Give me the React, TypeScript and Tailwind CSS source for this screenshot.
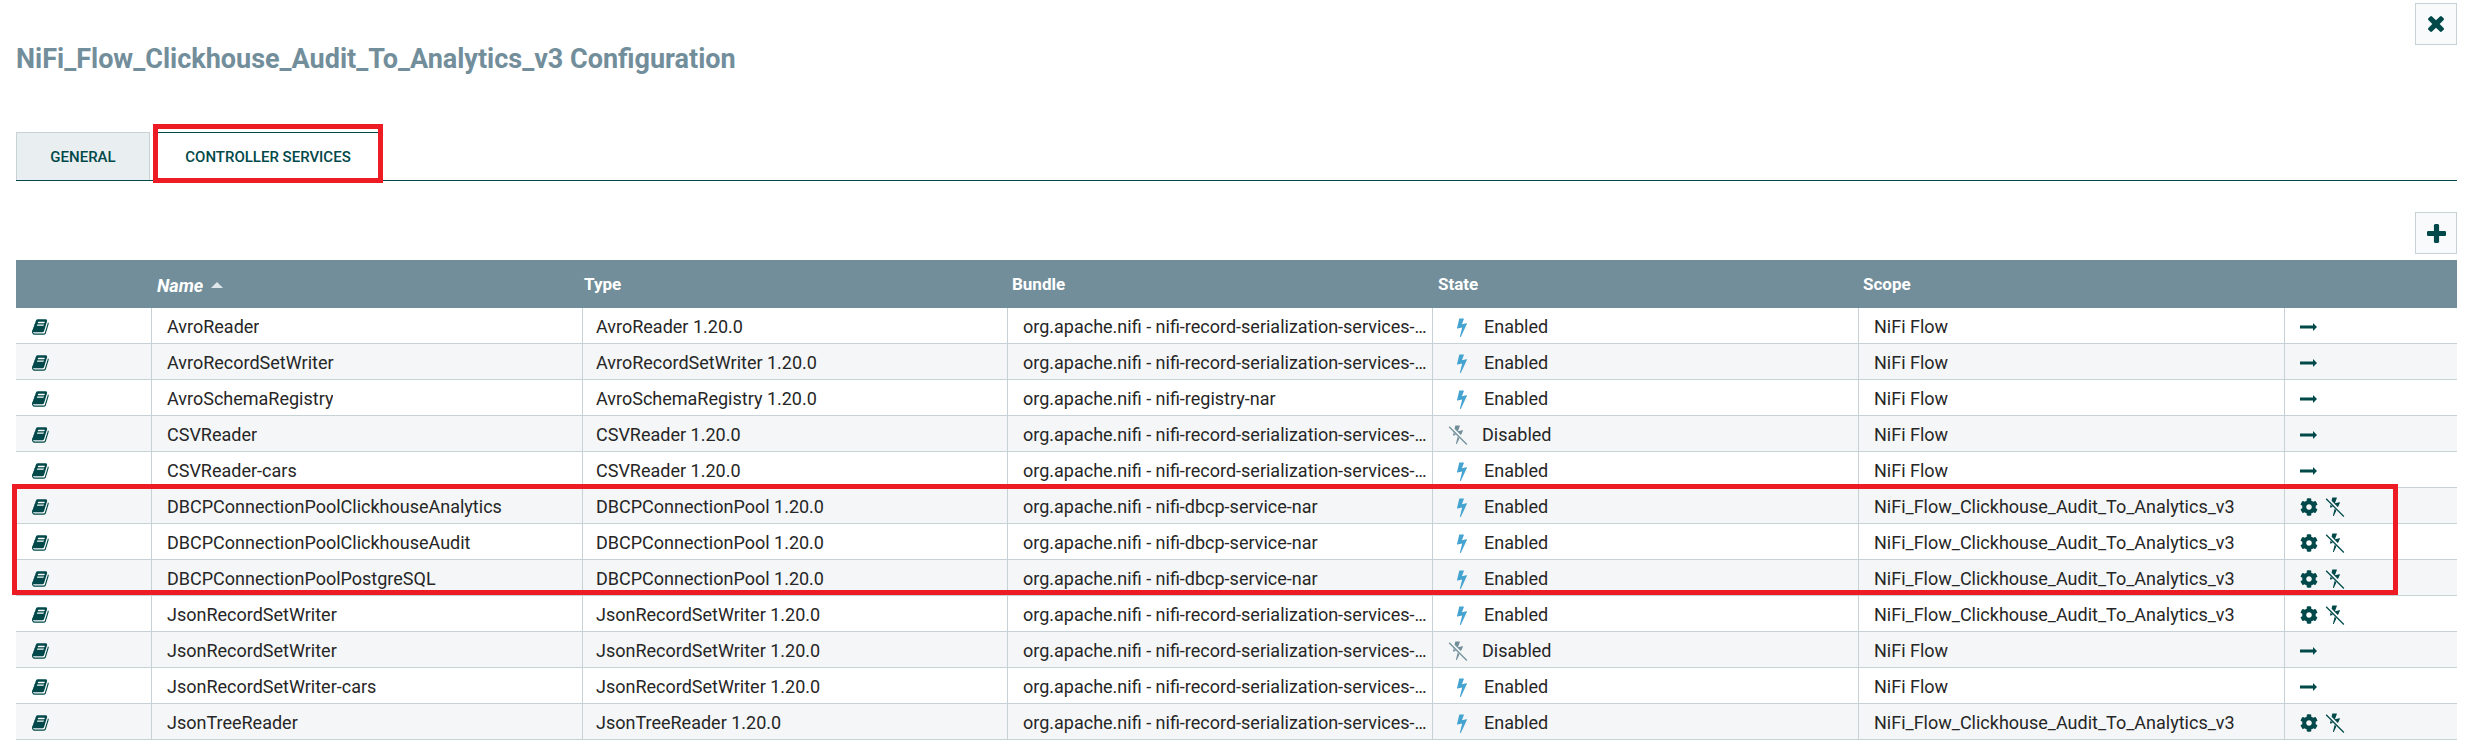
import { useId } from "react";
import { FaCog } from "react-icons/fa";

const BOOK =
  "M1639 478q40 57 18 129l-275 906q-19 64-76.5 107.5t-122.5 43.5h-923q-77 0-148.5-53.5t-99.5-131.5q-24-67-2-127 0-4 3-27t4-37q1-8-3-21.5t-3-19.5q2-11 8-21t16.5-23.5 16.5-23.5q23-38 45-91.5t30-91.5q3-10 .5-30t-.5-28q3-11 17-28t17-23q21-36 42-92t25-90q1-9-2.5-32t.5-28q4-13 22-30.5t22-22.5q19-26 42.5-84.5t27.5-96.5q1-8-3-25.5t-2-26.5q2-8 9-18t18-23 17-21q8-12 16.5-30.5t15-35 16-36 19.5-32 26.5-23.5 36-11.5 47.5 5.5l-1 3q38-9 51-9h761q74 0 114 56t18 130l-274 906q-36 119-71.5 153.5t-128.5 34.5h-869q-27 0-38 15-11 16-1 43 24 70 144 70h923q29 0 56-15.5t35-41.5l300-987q7-22 5-57 38 15 59 43zm-1064 2q-4 13 2 22.5t20 9.5h608q13 0 25.5-9.5t16.5-22.5l21-64q4-13-2-22.5t-20-9.5h-608q-13 0-25.5 9.5t-16.5 22.5zm-83 256q-4 13 2 22.5t20 9.5h608q13 0 25.5-9.5t16.5-22.5l21-64q4-13-2-22.5t-20-9.5h-608q-13 0-25.5 9.5t-16.5 22.5z";
const BOLT =
  "M1333 566q18 20 7 44l-540 1157q-13 25-42 25-4 0-14-2-17-5-25.5-19t-4.5-30l197-808-406 101q-4 1-12 1-18 0-31-11-18-15-13-39l201-825q4-14 16-23t28-9h328q19 0 32 12.5t13 29.5q0 8-5 18l-171 463 396-98q8-2 12-2 19 0 34 15z";
const TIMES =
  "M1298 1322q0 40-28 68l-136 136q-28 28-68 28t-68-28l-294-294-294 294q-28 28-68 28t-68-28l-136-136q-28-28-28-68t28-68l294-294-294-294q-28-28-28-68t28-68l136-136q28-28 68-28t68 28l294 294 294-294q28-28 68-28t68 28l136 136q28 28 28 68t-28 68l-294 294 294 294q28 28 28 68z";
const PLUS =
  "M1600 736v192q0 40-28 68t-68 28h-416v416q0 40-28 68t-68 28h-192q-40 0-68-28t-28-68v-416h-416q-40 0-68-28t-28-68v-192q0-40 28-68t68-28h416v-416q0-40 28-68t68-28h192q40 0 68 28t28 68v416h416q40 0 68 28t28 68z";

const RSS = "org.apache.nifi - nifi-record-serialization-services-nar";
const DBCP = "org.apache.nifi - nifi-dbcp-service-nar";
const FLOW = "NiFi Flow";
const PG = "NiFi_Flow_Clickhouse_Audit_To_Analytics_v3";

const rows = [
  { name: "AvroReader", type: "AvroReader 1.20.0", bundle: RSS, enabled: true, scope: FLOW },
  { name: "AvroRecordSetWriter", type: "AvroRecordSetWriter 1.20.0", bundle: RSS, enabled: true, scope: FLOW },
  { name: "AvroSchemaRegistry", type: "AvroSchemaRegistry 1.20.0", bundle: "org.apache.nifi - nifi-registry-nar", enabled: true, scope: FLOW },
  { name: "CSVReader", type: "CSVReader 1.20.0", bundle: RSS, enabled: false, scope: FLOW },
  { name: "CSVReader-cars", type: "CSVReader 1.20.0", bundle: RSS, enabled: true, scope: FLOW },
  { name: "DBCPConnectionPoolClickhouseAnalytics", type: "DBCPConnectionPool 1.20.0", bundle: DBCP, enabled: true, scope: PG },
  { name: "DBCPConnectionPoolClickhouseAudit", type: "DBCPConnectionPool 1.20.0", bundle: DBCP, enabled: true, scope: PG },
  { name: "DBCPConnectionPoolPostgreSQL", type: "DBCPConnectionPool 1.20.0", bundle: DBCP, enabled: true, scope: PG },
  { name: "JsonRecordSetWriter", type: "JsonRecordSetWriter 1.20.0", bundle: RSS, enabled: true, scope: PG },
  { name: "JsonRecordSetWriter", type: "JsonRecordSetWriter 1.20.0", bundle: RSS, enabled: false, scope: FLOW },
  { name: "JsonRecordSetWriter-cars", type: "JsonRecordSetWriter 1.20.0", bundle: RSS, enabled: true, scope: FLOW },
  { name: "JsonTreeReader", type: "JsonTreeReader 1.20.0", bundle: RSS, enabled: true, scope: PG },
];

const GRID = "grid grid-cols-[135px_431px_425px_425px_426px_426px_1fr]";

function Glyph({ d, className, box = "0 0 1792 1792" }: { d: string; className: string; box?: string }) {
  return (
    <svg viewBox={box} fill="currentColor" className={className}>
      <path d={d} />
    </svg>
  );
}

// nifi's "enable-false" icon: the bolt with a slash through it and a gap cut round the slash
function BoltOff({ className }: { className: string }) {
  const id = useId();
  return (
    <svg viewBox="0 0 1792 1792" className={className}>
      <mask id={id}>
        <rect width="1792" height="1792" fill="white" />
        <path d="M100 160 1690 1750" stroke="black" strokeWidth="300" />
      </mask>
      <path d={BOLT} fill="currentColor" mask={`url(#${id})`} transform="translate(0 -90)" />
      <path d="M100 160 1690 1750" stroke="currentColor" strokeWidth="110" />
    </svg>
  );
}

function Cell({ children, className = "pl-[15px]" }: { children: React.ReactNode; className?: string }) {
  return (
    <div className={`flex items-center min-w-0 pr-[5px] border-l border-[#c7d2d7] ${className}`}>
      <span className="truncate">{children}</span>
    </div>
  );
}

export default function App() {
  return (
    <div className="relative w-[2468px] h-[755px] overflow-hidden bg-white font-['Roboto',sans-serif] text-[#262626]">
      <div className="flex justify-end pt-[3px] pr-[11px]">
        <button className="flex items-center justify-center w-[42px] h-[42px] border border-[#c7d2d7] bg-[#f9fafb] text-[#004849]">
          <Glyph d={TIMES} box="110 366 1188 1188" className="w-[16px] h-[16px]" />
        </button>
      </div>

      <h1 className="pl-4 text-[27px] leading-[28px] font-bold text-[#728e9b]">
        NiFi_Flow_Clickhouse_Audit_To_Analytics_v3 Configuration
      </h1>

      <div className="flex mt-[59px] ml-4 mr-[11px] h-[49px] border-b border-[#004849] text-[15px] font-medium text-[#004849]">
        <div className="flex items-center justify-center pt-[2px] w-[134px] bg-[#e9eef0] border border-b-0 border-[#c7d2d7]">GENERAL</div>
        <div className="flex items-center justify-center pt-[2px] pr-[2px] w-[226px] ml-[6px] bg-white border-t border-[#004849]">CONTROLLER SERVICES</div>
      </div>

      <div className="flex justify-end mt-[31px] pr-[11px]">
        <button className="flex items-center justify-center w-[42px] h-[42px] border border-[#c7d2d7] bg-[#f9fafb] text-[#004849]">
          <Glyph d={PLUS} box="192 128 1408 1408" className="w-[19px] h-[19px]" />
        </button>
      </div>

      <div className="mt-[6px] ml-4 mr-[11px] text-[18px]">
        <div className={`${GRID} h-[48px] pt-[2px] bg-[#728e9b] text-[17px] text-white font-bold`}>
          <div />
          <div className="flex items-center pl-[6px] italic text-[18px]">
            Name
            <span className="ml-2 w-0 h-0 border-x-[6px] border-x-transparent border-b-[6px] border-b-[#dfe6e9]" />
          </div>
          <div className="flex items-center pl-[2px]">Type</div>
          <div className="flex items-center pl-[5px]">Bundle</div>
          <div className="flex items-center pl-[6px]">State</div>
          <div className="flex items-center pl-[5px]">Scope</div>
          <div />
        </div>
        {rows.map((row, i) => (
          <div
            key={i}
            className={`${GRID} h-[36px] border-b border-[#c7d2d7] ${i % 2 === 1 ? "bg-[#f4f6f7]" : "bg-white"}`}
          >
            <div className="flex items-center pl-4 pt-[2px] text-[#004849]">
              <Glyph d={BOOK} className="w-[18px] h-[18px]" />
            </div>
            <Cell className="pl-[15px] pt-[2px]">{row.name}</Cell>
            <Cell className="pl-[13px] pt-[2px]">{row.type}</Cell>
            <Cell className="pl-[15px] pt-[2px]">{row.bundle}</Cell>
            <div className="flex items-center pt-[2px] border-l border-[#c7d2d7]">
              {row.enabled ? (
                <>
                  <Glyph d={BOLT} className="ml-[19px] w-[20px] h-[20px] text-[#44a3cf]" />
                  <span className="ml-[12px]">Enabled</span>
                </>
              ) : (
                <>
                  <BoltOff className="ml-[15px] w-[20px] h-[20px] text-[#728e9b]" />
                  <span className="ml-[14px]">Disabled</span>
                </>
              )}
            </div>
            <Cell className="pl-[15px] pt-[2px]">{row.scope}</Cell>
            <div className="flex items-center pl-[15px] pt-[2px] border-l border-[#c7d2d7] text-[#004849]">
              {row.scope === FLOW ? (
                <svg viewBox="0 0 17 8" className="w-[17px] h-[8px]" fill="currentColor">
                  <path d="M0 2.5H13V0L17 4 13 8V5.5H0Z" />
                </svg>
              ) : (
                <>
                  <FaCog className="w-[18px] h-[18px]" />
                  <BoltOff className="ml-[7px] w-[20px] h-[20px]" />
                </>
              )}
            </div>
          </div>
        ))}
      </div>

      {/* red annotation boxes drawn over the screenshot */}
      <div className="absolute left-[153px] top-[124px] w-[230px] h-[59px] border-[5px] border-[#ed1c24]" />
      <div className="absolute left-[12px] top-[484px] w-[2386px] h-[111px] border-[5px] border-[#ed1c24]" />
    </div>
  );
}
